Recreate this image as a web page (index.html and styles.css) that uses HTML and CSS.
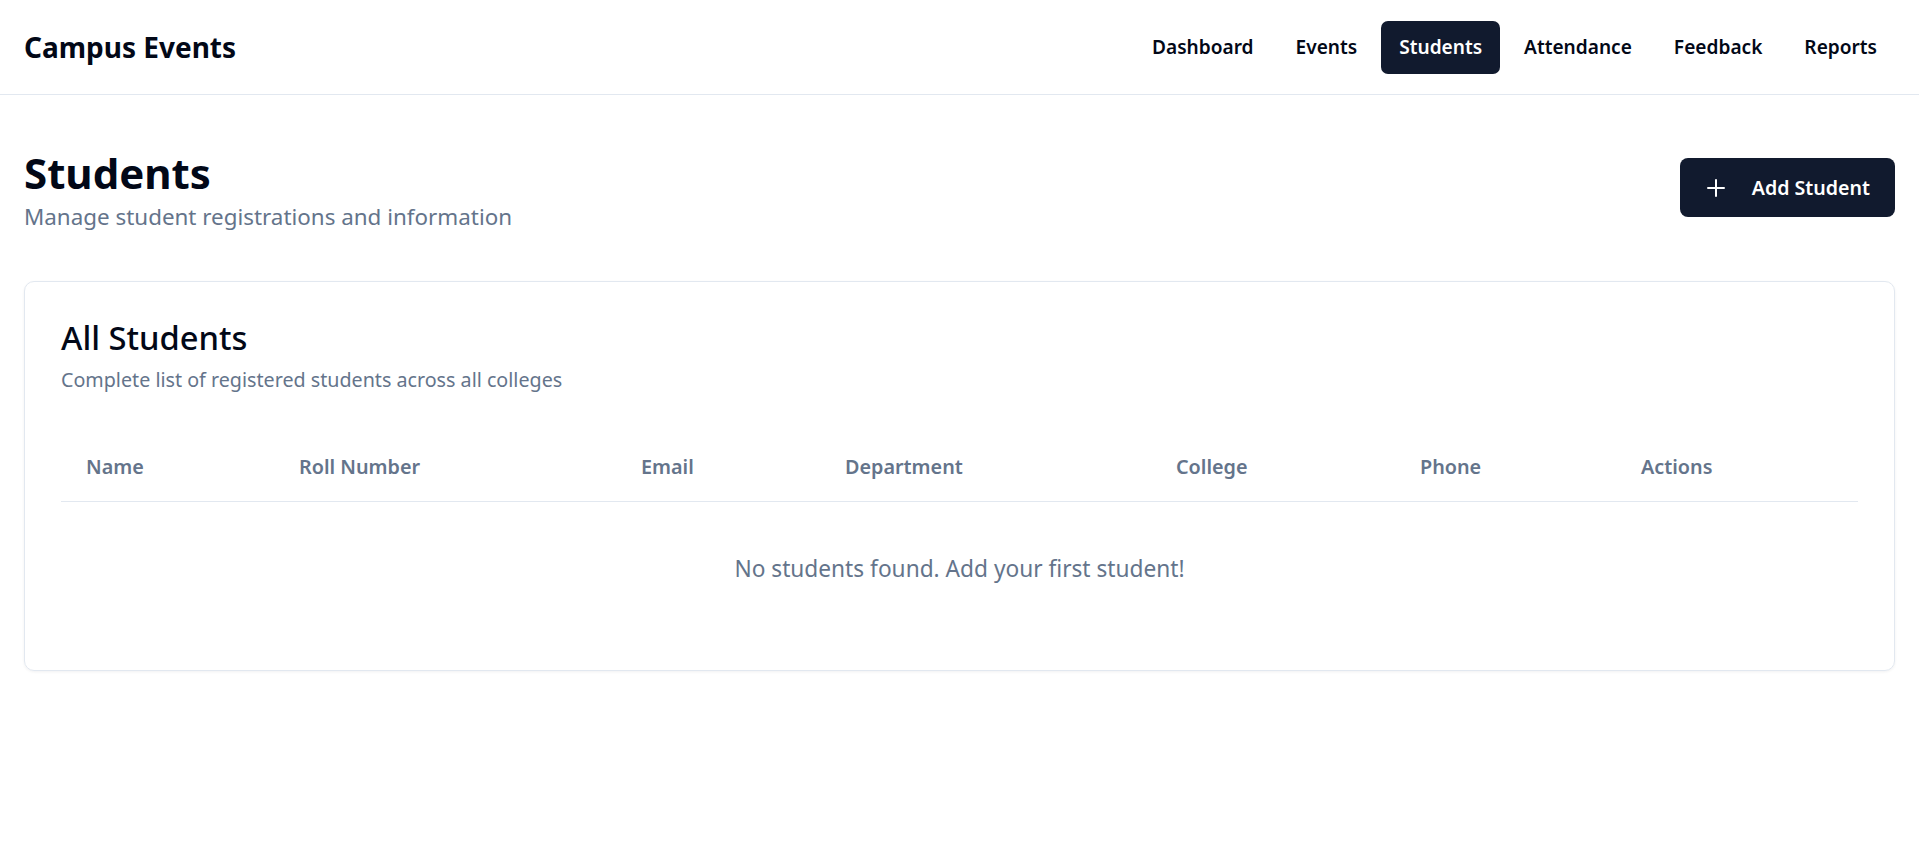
FILE: index.html
```html
<!DOCTYPE html>
<html lang="en">
<head>
<meta charset="utf-8">
<title>Campus Events - Students</title>
<link rel="stylesheet" href="styles.css">
</head>
<body>
<header class="topbar">
  <div class="brand">Campus Events</div>
  <nav class="nav">
    <a class="nav-link" href="#">Dashboard</a>
    <a class="nav-link" href="#">Events</a>
    <a class="nav-link active" href="#">Students</a>
    <a class="nav-link" href="#">Attendance</a>
    <a class="nav-link" href="#">Feedback</a>
    <a class="nav-link" href="#">Reports</a>
  </nav>
</header>
<main class="main">
  <section class="page-head">
    <div class="page-titles">
      <h1 class="page-title">Students</h1>
      <p class="page-sub">Manage student registrations and information</p>
    </div>
    <button class="btn-primary" type="button">
      <svg class="btn-icon" viewBox="0 0 24 24" width="24" height="24" fill="none" stroke="currentColor" stroke-width="2" stroke-linecap="round"><path d="M4 12h16M12 4v16"/></svg>
      <span>Add Student</span>
    </button>
  </section>
  <section class="card">
    <h2 class="card-title">All Students</h2>
    <p class="card-sub">Complete list of registered students across all colleges</p>
    <table class="table">
      <colgroup>
        <col class="c-name"><col class="c-roll"><col class="c-email"><col class="c-dept"><col class="c-college"><col class="c-phone"><col class="c-actions">
      </colgroup>
      <thead>
        <tr>
          <th>Name</th><th>Roll Number</th><th>Email</th><th>Department</th><th>College</th><th>Phone</th><th>Actions</th>
        </tr>
      </thead>
      <tbody>
        <tr><td class="empty" colspan="7">No students found. Add your first student!</td></tr>
      </tbody>
    </table>
  </section>
</main>
</body>
</html>
```
FILE: styles.css
```css
* { box-sizing: border-box; }
html, body { margin: 0; padding: 0; }
body {
  font-family: "Noto Sans", "Open Sans", sans-serif;
  color: #0f172a;
  background: #ffffff;
}
.topbar {
  height: 95px;
  display: flex;
  align-items: center;
  justify-content: space-between;
  padding: 0 24px;
  border-bottom: 1px solid #e2e8f0;
}
.brand {
  font-size: 28px;
  font-weight: 700;
  color: #020817;
}
.nav {
  display: flex;
  gap: 6px;
  align-items: center;
}
.nav-link {
  display: flex;
  align-items: center;
  height: 53px;
  padding: 0 18px;
  border-radius: 7px;
  font-size: 19.1px;
  font-weight: 600;
  color: #020817;
  text-decoration: none;
}
.nav-link.active {
  background: #111a2e;
  color: #ffffff;
}
.main {
  padding: 50px 24px 24px;
}
.page-head {
  display: flex;
  justify-content: space-between;
  align-items: center;
}
.page-title {
  margin: 0;
  font-size: 42px;
  line-height: 56px;
  font-weight: 700;
  color: #020817;
}
.page-sub {
  margin: 0;
  font-size: 22.4px;
  line-height: 32px;
  color: #64748b;
}
.btn-primary {
  display: flex;
  align-items: center;
  gap: 24px;
  height: 59px;
  padding: 0 25px 0 24px;
  margin-bottom: 3px;
  border: 0;
  border-radius: 8px;
  background: #111a2e;
  color: #ffffff;
  font-family: inherit;
  font-size: 19.6px;
  font-weight: 600;
}
.btn-icon { display: block; }
.card {
  margin-top: 48px;
  border: 1px solid #e2e8f0;
  border-radius: 10px;
  box-shadow: 0 1px 3px rgba(15, 23, 42, 0.06);
  padding: 36px 36px 34px;
}
.card-title {
  margin: 0;
  font-size: 32.7px;
  line-height: 40px;
  font-weight: 500;
  color: #020817;
}
.card-sub {
  margin: 8px 0 0;
  font-size: 19.7px;
  line-height: 28px;
  color: #64748b;
}
.table {
  width: 100%;
  margin-top: 39px;
  border-collapse: collapse;
  table-layout: fixed;
}
.c-name { width: 213px; }
.c-roll { width: 342px; }
.c-email { width: 204px; }
.c-dept { width: 331px; }
.c-college { width: 244px; }
.c-phone { width: 221px; }
.c-actions { width: auto; }
.table th {
  text-align: left;
  padding: 0 25px;
  height: 68px;
  font-size: 19.8px;
  font-weight: 600;
  color: #64748b;
  border-bottom: 1px solid #e2e8f0;
}
.table td.empty {
  text-align: center;
  height: 135px;
  padding: 0;
  font-size: 22.7px;
  color: #64748b;
}
```
